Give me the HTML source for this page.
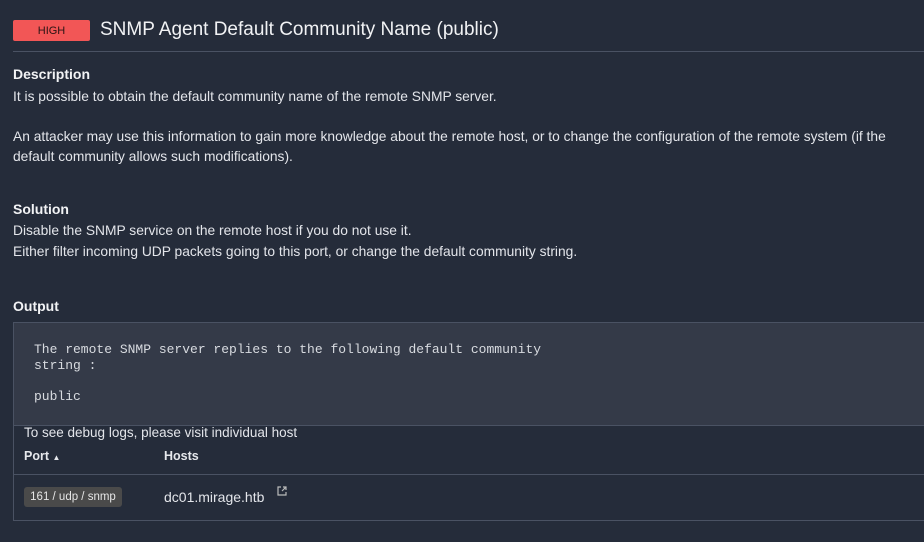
<!DOCTYPE html>
<html><head><style>
body{margin:0;width:924px;height:542px;background:#252c3a;color:#e6e8ec;font-family:"Liberation Sans",sans-serif;overflow:hidden;position:relative}
.a{position:absolute;white-space:nowrap}
.t{font-size:13.8px;color:#e3e5ea}
.h{font-size:14px;font-weight:bold;color:#f2f3f5}
.m{font-family:"Liberation Mono",monospace;font-size:13px;color:#d8dbe0}
</style></head><body>
<div class="a" style="left:13px;top:20px;width:77px;height:21px;background:#f25656;border-radius:2px;color:#2a1414;font-size:11px;text-align:center;line-height:22px">HIGH</div>
<div class="a" style="left:100px;top:19px;font-size:19px;color:#f1f2f4">SNMP Agent Default Community Name (public)</div>
<div class="a" style="left:13px;top:51px;width:911px;height:1px;background:#4a5263"></div>
<div class="a h" style="left:13px;top:66px">Description</div>
<div class="a t" style="left:13px;top:89px">It is possible to obtain the default community name of the remote SNMP server.</div>
<div class="a t" style="left:13px;top:129px">An attacker may use this information to gain more knowledge about the remote host, or to change the configuration of the remote system (if the</div>
<div class="a t" style="left:13px;top:149px">default community allows such modifications).</div>
<div class="a h" style="left:13px;top:201px">Solution</div>
<div class="a t" style="left:13px;top:223px">Disable the SNMP service on the remote host if you do not use it.</div>
<div class="a t" style="left:13px;top:244px">Either filter incoming UDP packets going to this port, or change the default community string.</div>
<div class="a h" style="left:13px;top:298px">Output</div>
<div class="a" style="left:13px;top:322px;width:920px;height:199px;border:1px solid #4a5263;box-sizing:border-box"></div>
<div class="a" style="left:14px;top:323px;width:910px;height:102px;background:#343a48;border-bottom:1px solid #4a5263"></div>
<div class="a m" style="left:34px;top:342px">The remote SNMP server replies to the following default community</div>
<div class="a m" style="left:34px;top:358px">string :</div>
<div class="a m" style="left:34px;top:389px">public</div>
<div class="a t" style="left:24px;top:425px;font-size:13.5px">To see debug logs, please visit individual host</div>
<div class="a" style="left:24px;top:449px;font-size:12.5px;font-weight:bold">Port <span style="font-size:8px">▲</span></div>
<div class="a" style="left:164px;top:449px;font-size:12.5px;font-weight:bold">Hosts</div>
<div class="a" style="left:14px;top:474px;width:910px;height:1px;background:#4a5263"></div>
<div class="a" style="left:24px;top:487px;width:98px;height:20px;background:#4a4a4a;border-radius:3px;font-size:11.5px;line-height:21px;text-align:center;color:#e6e6e6">161 / udp / snmp</div>
<div class="a t" style="left:164px;top:489px;font-size:14px">dc01.mirage.htb</div>
<svg class="a" style="left:277px;top:486px" width="10" height="10" viewBox="0 0 10 10"><path d="M4 1H1v8h8V6" fill="none" stroke="#bbb" stroke-width="1.2"/><path d="M5 5L9 1M6 1h3v3" fill="none" stroke="#bbb" stroke-width="1.2"/></svg>
</body></html>
